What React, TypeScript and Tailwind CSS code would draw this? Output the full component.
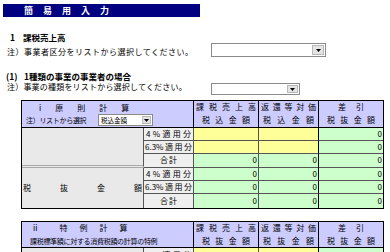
import React from "react";

const ROWSTART = ["row-start-3", "row-start-4", "row-start-5", "row-start-6", "row-start-7", "row-start-8"];
const COLSTART = ["col-start-3", "col-start-4", "col-start-5"];

function Dist({ items, className }: { items: string[]; className: string }) {
  return (
    <div className={"flex justify-between items-center " + className}>
      {items.map((c, i) => (
        <span key={i}>{c}</span>
      ))}
    </div>
  );
}

function Arrow() {
  return (
    <svg width="5" height="3" viewBox="0 0 5 3">
      <path d="M0 0 L5 0 L2.5 3 Z" fill="#000" />
    </svg>
  );
}

function Select({ className, text, btn }: { className: string; text?: string; btn: string }) {
  return (
    <div className={"flex border border-[#8a8a8a] bg-white " + className}>
      <div className="flex-1 flex items-center pl-[2px] text-[6.5px] text-black">{text}</div>
      <div className={"m-[1px] bg-[#e4e4e4] border border-[#b8b8b8] flex items-center justify-center " + btn}>
        <Arrow />
      </div>
    </div>
  );
}

type Cell = "y" | "g";
type Row = { label: string[]; pad: string; cells: Cell[] };

function DataTable({
  headA,
  headB,
  col3,
  col4,
  col5,
  rows,
  leftSplit,
  className,
}: {
  headA: React.ReactNode;
  headB: React.ReactNode;
  col3: [string[], string[]];
  col4: [string[], string[]];
  col5: [string[], string[]];
  rows: Row[];
  leftSplit: boolean;
  className: string;
}) {
  return (
    <div
      className={
        "ml-[21px] w-[363px] border border-black grid grid-cols-[122px_50px_65px_60px_64px] text-[8px] leading-none text-black " +
        className
      }
    >
      <div className="col-start-1 col-span-2 row-start-1 bg-[#ccccff] border-r border-black">{headA}</div>
      <div className="col-start-1 col-span-2 row-start-2 bg-[#ccccff] border-r border-b border-black">{headB}</div>
      <div className="col-start-3 row-start-1 row-span-2 bg-[#ccccff] border-r border-b border-black flex flex-col">
        <Dist items={col3[0]} className="h-[13px] px-[2px]" />
        <Dist items={col3[1]} className="h-[13px] px-[8px]" />
      </div>
      <div className="col-start-4 row-start-1 row-span-2 bg-[#ccccff] border-r border-b border-black flex flex-col">
        <Dist items={col4[0]} className="h-[13px] px-[2px]" />
        <Dist items={col4[1]} className="h-[13px] px-[4px]" />
      </div>
      <div className="col-start-5 row-start-1 row-span-2 bg-[#ccccff] border-b border-black flex flex-col">
        <Dist items={col5[0]} className="h-[13px] px-[19px]" />
        <Dist items={col5[1]} className="h-[13px] px-[8px]" />
      </div>

      {leftSplit ? (
        <>
          <div className="col-start-1 row-start-3 row-span-3 bg-[#e9e9e9] border-r border-r-[#555] border-b-[3px] border-b-[#a9a9a9] border-double" />
          <div className="col-start-1 row-start-6 row-span-3 bg-[#e9e9e9] border-r border-[#555] flex items-center">
            <Dist items={["税", "抜", "金", "額"]} className="w-full px-[1px]" />
          </div>
        </>
      ) : (
        <div className="col-start-1 row-start-3 bg-[#e9e9e9] border-r border-[#555]" />
      )}

      {rows.map((r, i) => {
        const last = i === rows.length - 1;
        return (
          <React.Fragment key={i}>
            <div
              className={
                "col-start-2 bg-[#efefef] border-r border-[#555] flex items-center " +
                ROWSTART[i] +
                (last ? "" : " border-b")
              }
            >
              <Dist items={r.label} className={"w-full " + r.pad} />
            </div>
            {r.cells.map((c, j) => (
              <div
                key={j}
                className={
                  COLSTART[j] +
                  " " +
                  ROWSTART[i] +
                  (c === "y" ? " bg-[#ffff99]" : " bg-[#ccffcc]") +
                  (j === 1 ? " border-r border-r-black" : j === 0 ? " border-r border-r-[#555]" : "") +
                  (last ? "" : " border-b border-b-[#555]") +
                  " flex items-center justify-end pr-[1px]"
                }
              >
                {c === "g" ? "0" : ""}
              </div>
            ))}
          </React.Fragment>
        );
      })}
    </div>
  );
}

const L4 = ["4", "%", "適", "用", "分"];
const L63 = ["6.3%", "適", "用", "分"];
const LSUM = ["合", "計"];

export default function App() {
  const rows1: Row[] = [
    { label: L4, pad: "px-[2px]", cells: ["y", "y", "g"] },
    { label: L63, pad: "px-[1px]", cells: ["y", "y", "g"] },
    { label: LSUM, pad: "px-[16px]", cells: ["g", "g", "g"] },
    { label: L4, pad: "px-[2px]", cells: ["g", "g", "g"] },
    { label: L63, pad: "px-[1px]", cells: ["g", "g", "g"] },
    { label: LSUM, pad: "px-[16px]", cells: ["g", "g", "g"] },
  ];
  const rows2: Row[] = [{ label: L4, pad: "px-[2px]", cells: ["y", "y", "g"] }];

  return (
    <div className="w-[390px] h-[252px] overflow-hidden bg-white text-black font-['Noto_Sans_CJK_JP',sans-serif] leading-none">
      <div className="h-[4px]" />
      <div className="ml-[3px] w-[197px] h-[13px] bg-[#000080] flex items-center pl-[21px] gap-[10px] text-white font-bold text-[9px]">
        {["簡", "易", "用", "入", "力"].map((c, i) => (
          <span key={i}>{c}</span>
        ))}
      </div>

      <div className="mt-[14px] h-[12px] flex items-center font-bold text-[8.5px]">
        <span className="ml-[10px] w-[13px]">1</span>
        <span>課税売上高</span>
      </div>

      <div className="h-[14px] flex items-center">
        <div className="w-[211px] pl-[7px] pt-[4px] text-[8px] tracking-[0.5px]">注）事業者区分をリストから選択してください。</div>
        <Select className="w-[115px] h-[14px]" btn="w-[12px]" />
      </div>

      <div className="mt-[13px] h-[12px] flex items-center font-bold text-[8.5px]">
        <span className="ml-[6px] w-[18px]">(1)</span>
        <span>1種類の事業の事業者の場合</span>
      </div>

      <div className="mt-[1px] h-[12px] flex items-start">
        <div className="w-[211px] pl-[7px] text-[8px] tracking-[0.2px]">注）事業の種類をリストから選択してください。</div>
        <Select className="w-[89px] h-[12px]" btn="w-[11px]" />
      </div>

      <DataTable
        className="mt-[5px] grid-rows-[repeat(8,13.33px)]"
        headA={
          <div className="h-full flex items-center pl-[17px] gap-[14px]">
            {["i", "原", "則", "計", "算"].map((c, i) => (
              <span key={i}>{c}</span>
            ))}
          </div>
        }
        headB={
          <div className="h-full flex items-center">
            <div className="w-[76px] pl-[4px] text-[7px] tracking-[-0.3px]">注）リストから選択</div>
            <Select className="w-[55px] h-[12px]" text="税込金額" btn="w-[9px]" />
          </div>
        }
        col3={[["課", "税", "売", "上", "高"], ["税", "込", "金", "額"]]}
        col4={[["返", "還", "等", "対", "価"], ["税", "込", "金", "額"]]}
        col5={[["差", "引"], ["税", "抜", "金", "額"]]}
        rows={rows1}
        leftSplit={true}
      />

      <DataTable
        className="mt-[12px] grid-rows-[repeat(3,13.33px)]"
        headA={
          <div className="h-full flex items-center pl-[11px] gap-[12px]">
            <span className="mr-[10px]">ii</span>
            {["特", "例", "計", "算"].map((c, i) => (
              <span key={i}>{c}</span>
            ))}
          </div>
        }
        headB={
          <div className="h-full flex items-center pl-[8px] text-[7px] tracking-[-0.3px]">
            課税標準額に対する消費税額の計算の特例
          </div>
        }
        col3={[["課", "税", "売", "上", "高"], ["税", "抜", "金", "額"]]}
        col4={[["返", "還", "等", "対", "価"], ["税", "抜", "金", "額"]]}
        col5={[["差", "引"], ["税", "抜", "金", "額"]]}
        rows={rows2}
        leftSplit={false}
      />
    </div>
  );
}
